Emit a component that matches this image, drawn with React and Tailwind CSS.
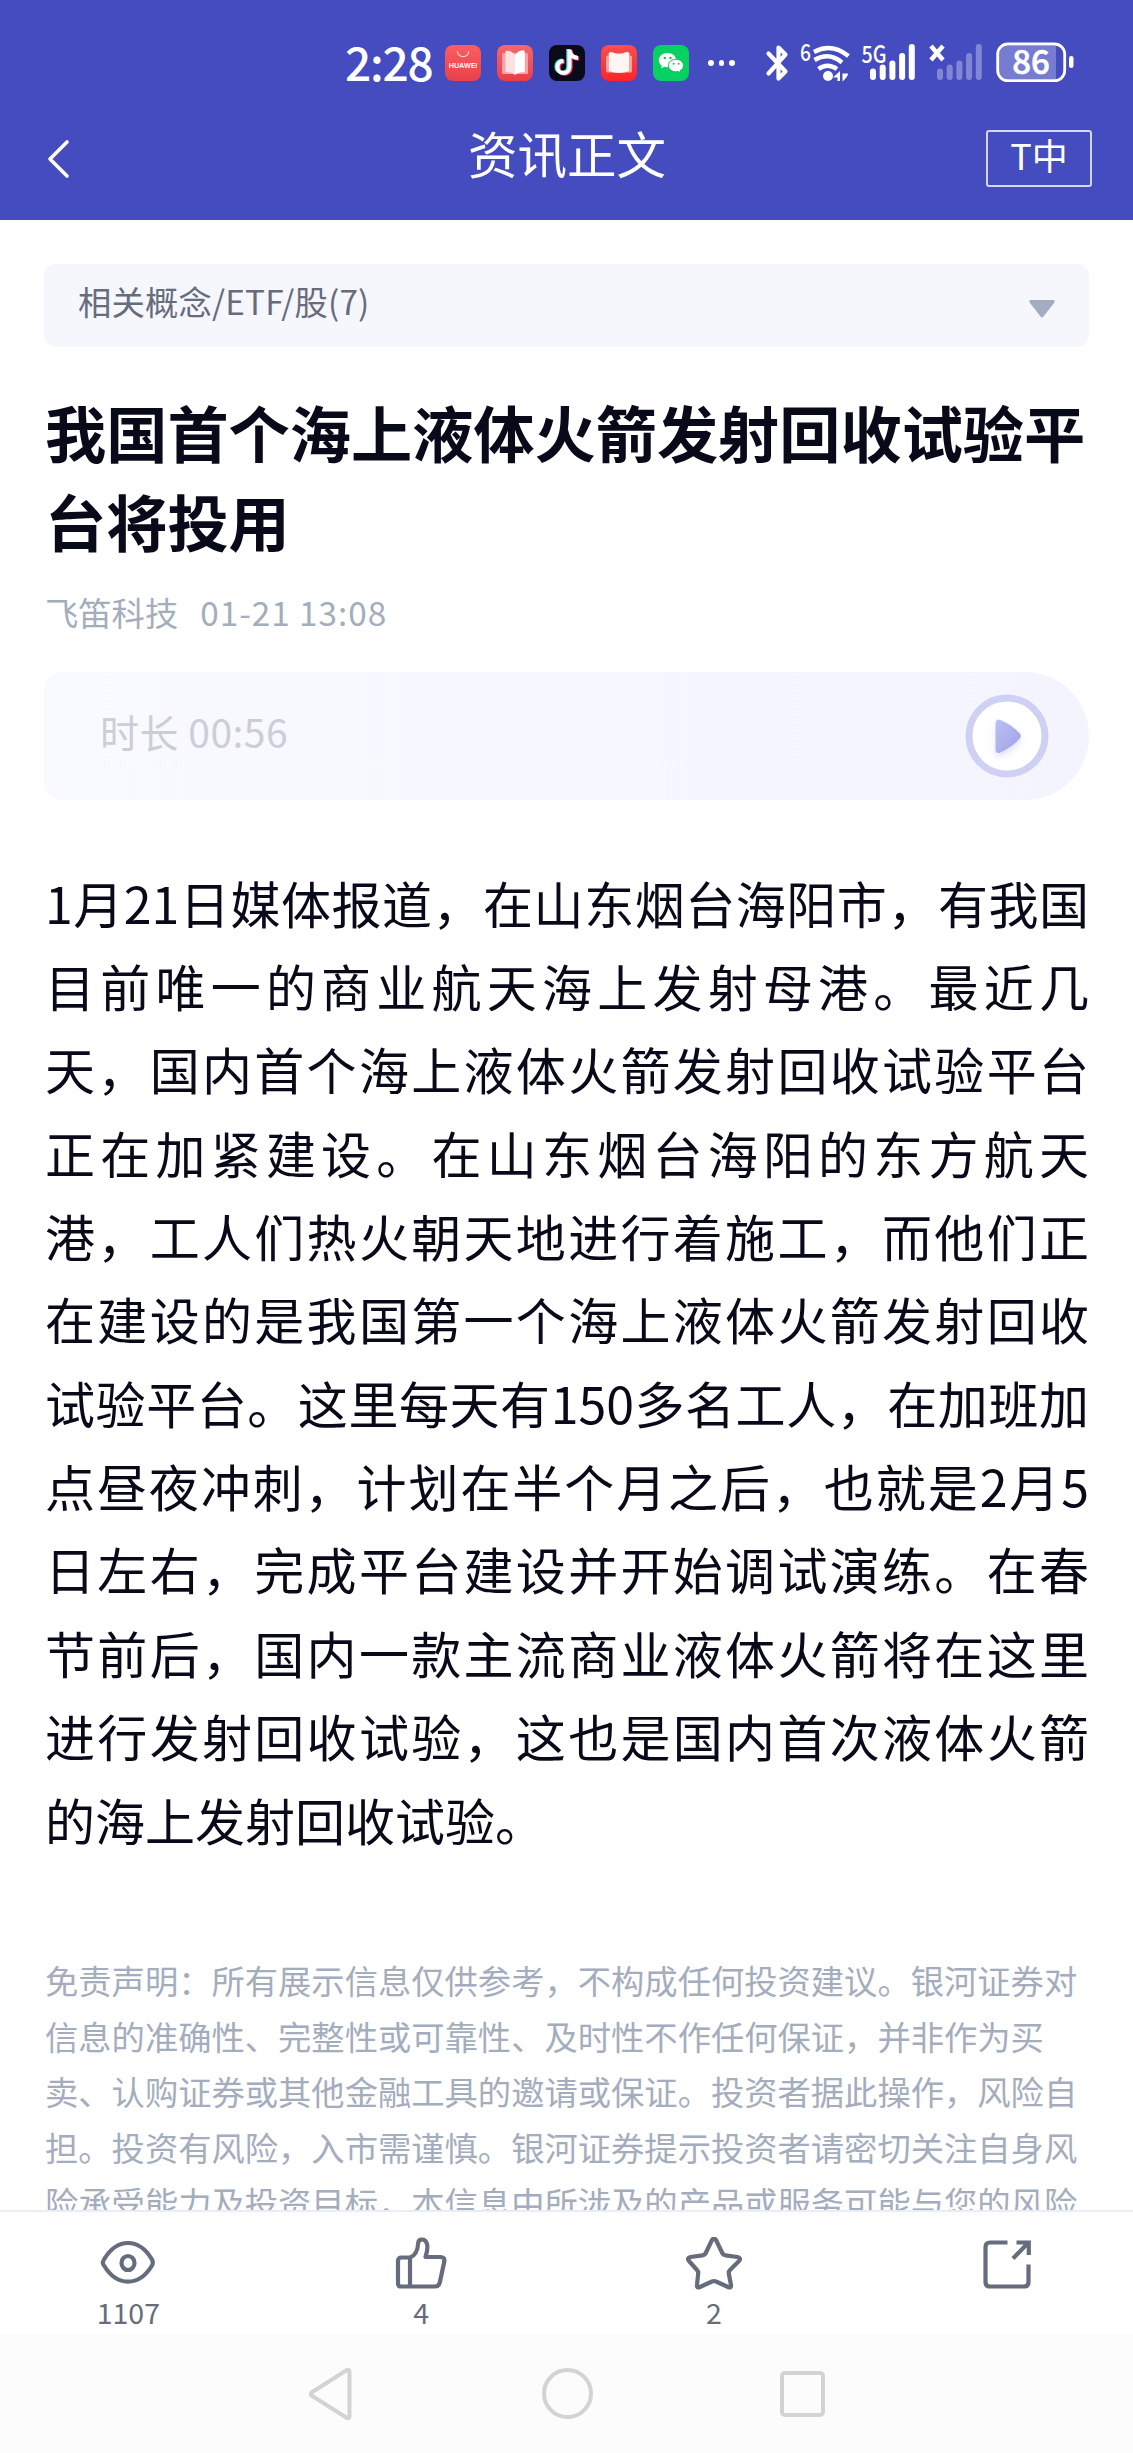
const bodyLines = [
  '1月21日媒体报道，在山东烟台海阳市，有我国',
  '目前唯一的商业航天海上发射母港。最近几',
  '天，国内首个海上液体火箭发射回收试验平台',
  '正在加紧建设。在山东烟台海阳的东方航天',
  '港，工人们热火朝天地进行着施工，而他们正',
  '在建设的是我国第一个海上液体火箭发射回收',
  '试验平台。这里每天有150多名工人，在加班加',
  '点昼夜冲刺，计划在半个月之后，也就是2月5',
  '日左右，完成平台建设并开始调试演练。在春',
  '节前后，国内一款主流商业液体火箭将在这里',
  '进行发射回收试验，这也是国内首次液体火箭',
  '的海上发射回收试验。',
];

const disclaimerLines = [
  '免责声明：所有展示信息仅供参考，不构成任何投资建议。银河证券对',
  '信息的准确性、完整性或可靠性、及时性不作任何保证，并非作为买',
  '卖、认购证券或其他金融工具的邀请或保证。投资者据此操作，风险自',
  '担。投资有风险，入市需谨慎。银河证券提示投资者请密切关注自身风',
  '险承受能力及投资目标，本信息中所涉及的产品或服务可能与您的风险',
];

const HuaweiIcon = () => (
  <svg className="size-9" viewBox="0 0 36 36">
    <defs>
      <linearGradient id="hw" x1="0" y1="0" x2="0" y2="1">
        <stop offset="0" stopColor="#fb5d62" />
        <stop offset="1" stopColor="#e9404a" />
      </linearGradient>
    </defs>
    <rect width="36" height="36" rx="8" fill="url(#hw)" />
    <path d="M12.500 6.200a5.600 5.600 0 0 0 11.200 0" fill="none" stroke="#ffd9d9" strokeWidth="1.100" />
    <text x="18" y="23.200" textAnchor="middle" fontSize="6.600" fontWeight="600" fill="#fff" textLength="28.500" lengthAdjust="spacingAndGlyphs" fontFamily="Inter, sans-serif">
      HUAWEI
    </text>
  </svg>
);

const BookIcon = () => (
  <svg className="size-9" viewBox="0 0 36 36">
    <defs>
      <linearGradient id="bk" x1="0" y1="0" x2="0" y2="1">
        <stop offset="0" stopColor="#f4686c" />
        <stop offset="1" stopColor="#ea3d47" />
      </linearGradient>
    </defs>
    <rect width="36" height="36" rx="8" fill="url(#bk)" />
    <rect x="5" y="8" width="26" height="21" rx="1.500" fill="#f8a4a6" />
    <path d="M8.500 6Q14 4.500 18 10v20q-3-3-9.500-3z" fill="#fbe1e2" />
    <path d="M18 10q3-4.500 8-4.800 1.800 0 1.800 1.800v20q-7 0-9.800 3z" fill="#fff" />
  </svg>
);

const note = 'M20.500 4.500v17.500a6 6 0 1 1-6-6M20.500 5q.6 7.400 8.500 8';

const TiktokIcon = () => (
  <svg className="size-9" viewBox="0 0 36 36" fill="none" strokeWidth="4">
    <rect width="36" height="36" rx="8" fill="#0b0a18" />
    <path d={note} stroke="#2ce5e4" transform="translate(-1.200 -.6)" />
    <path d={note} stroke="#f9305a" transform="translate(1.200 .8)" />
    <path d={note} stroke="#fff" />
  </svg>
);

const ReaderIcon = () => (
  <svg className="size-9" viewBox="0 0 36 36">
    <defs>
      <linearGradient id="rd" x1="0" y1="0" x2="0" y2="1">
        <stop offset="0" stopColor="#ff4e4c" />
        <stop offset="1" stopColor="#fb2429" />
      </linearGradient>
    </defs>
    <rect width="36" height="36" rx="8" fill="url(#rd)" />
    <rect x="5" y="10.500" width="26" height="17" rx="1.500" fill="#ffa3a0" />
    <path d="M7.500 8.500q.5-2 3-1.500 7.500 3.500 15 0 2.500-.5 3 1.500l-.5 3V26q-10 4-20 0V11.500z" fill="#fff5f3" />
  </svg>
);

const WechatIcon = () => (
  <svg className="size-9" viewBox="0 0 36 36">
    <rect width="36" height="36" rx="8" fill="#07d160" />
    <path d="M14.500 8C9.500 8 5.800 11.200 5.800 15.200c0 2.300 1.200 4.200 3.100 5.500l-.9 2.700 3.200-1.600c5.600 1.500 12-1.300 12-6.600 0-4-3.700-7.200-8.700-7.200z" fill="#fff" />
    <path d="M23 14.300c-4.300 0-7.600 2.800-7.600 6.300 0 4.500 5 7.200 9.800 5.900l2.700 1.500-.7-2.400c2-1.100 3.300-2.900 3.300-5 0-3.500-3.200-6.300-7.500-6.300z" fill="#fff" stroke="#07c85a" strokeWidth="1" />
    <g fill="#07c85a">
      <circle cx="11.800" cy="13" r="1.200" />
      <circle cx="17.500" cy="13" r="1.200" />
      <circle cx="20.600" cy="18.800" r="1" />
      <circle cx="25.600" cy="18.800" r="1" />
    </g>
  </svg>
);

const SignalBars = () => (
  <g>
    <rect x="0" y="24.500" width="6" height="11.500" rx="3" />
    <rect x="9.700" y="20.500" width="6" height="15.500" rx="3" />
    <rect x="19.400" y="16.500" width="6" height="19.500" rx="3" />
    <rect x="29.100" y="9" width="6" height="27" rx="3" />
    <rect x="38.800" y="0" width="6" height="36" rx="3" />
  </g>
);

const StatusBar = () => (
  <div className="flex h-[126px] items-center pl-[345px] text-white">
    <span className="w-[100px] pb-1 text-[46px] leading-[60px] font-medium tracking-[-1.2px]">2:28</span>
    <div className="flex gap-4">
      <HuaweiIcon />
      <BookIcon />
      <TiktokIcon />
      <ReaderIcon />
      <WechatIcon />
    </div>
    <div className="ml-[19px] flex gap-[5px]">
      <i className="size-[5.5px] rounded-full bg-white" />
      <i className="size-[5.5px] rounded-full bg-white" />
      <i className="size-[5.5px] rounded-full bg-white" />
    </div>
    <svg className="ml-[30px] h-10 w-[26px] shrink-0" viewBox="0 0 26 40" fill="none" stroke="#fff" strokeWidth="4.200" strokeLinecap="round" strokeLinejoin="round">
      <path d="M3.500 10.500 20.500 28.500 13.500 35.500V4.500L20.500 11.500 3.500 30.500" />
    </svg>
    <svg className="ml-[9px] h-10 w-[52px] shrink-0 overflow-visible" viewBox="0 0 52 40" fill="none" stroke="#fff" strokeWidth="4.500" strokeLinecap="round">
      <text x="0" y="17.500" fontSize="24" fontWeight="500" fill="#fff" stroke="none" textLength="11" lengthAdjust="spacingAndGlyphs">
        6
      </text>
      <path d="M14 9q17-9.500 34.500 4" strokeLinecap="butt" />
      <path d="M14.500 17q14.500-8.500 27.500 2.500" strokeLinecap="butt" />
      <path d="M18.500 26q9-6.500 18.500 0" strokeLinecap="butt" />
      <circle cx="28" cy="33" r="5" fill="#fff" stroke="none" />
      <path d="M40 28v10h-2.500v-3.500H33zM42.500 38.500V30.500h5.500q0 3-5.500 8z" fill="#fff" stroke="none" />
    </svg>
    <svg className="ml-[8.5px] h-10 w-[56px] shrink-0 overflow-visible" viewBox="0 0 56 40" fill="#fff">
      <text x="1.500" y="19.500" fontSize="24" fontWeight="500" textLength="25" lengthAdjust="spacingAndGlyphs">
        5G
      </text>
      <g transform="translate(10 1)">
        <SignalBars />
      </g>
    </svg>
    <svg className="ml-[11px] h-10 w-[56px] shrink-0" viewBox="0 0 56 40" fill="#fff">
      <path d="M4 3l12 14M16 3 4 17" stroke="#fff" strokeWidth="4.400" />
      <g transform="translate(10 1)" opacity=".33">
        <SignalBars />
      </g>
    </svg>
    <svg className="ml-[13px] h-10 w-[80px] shrink-0 overflow-visible" viewBox="0 0 80 40">
      <path d="M11 3h49v33H11a8 8 0 0 1-8-8V11a8 8 0 0 1 8-8z" fill="#fff" opacity=".27" />
      <rect x="1.700" y="1" width="67" height="36.600" rx="10" fill="none" stroke="#fff" strokeWidth="2.800" />
      <rect x="73" y="13" width="4.500" height="12" rx="2.200" fill="#fff" />
      <text x="35" y="31" textAnchor="middle" fontSize="33" fontWeight="500" fill="#fff" stroke="#fff" strokeWidth=".6">
        86
      </text>
    </svg>
  </div>
);

const TitleBar = () => (
  <div className="flex h-[94px] items-start justify-between pr-[41px] pl-[46px] text-white">
    <div className="flex w-[102px] pt-[13px]">
      <svg className="h-10 w-6" viewBox="0 0 24 40" fill="none" stroke="#fff" strokeWidth="3.600" strokeLinecap="round" strokeLinejoin="round">
        <path d="M21 3 4 20l17 17" />
      </svg>
    </div>
    <h1 className="text-[49.5px] leading-[53px]">资讯正文</h1>
    <button type="button" className="mt-1 h-[57px] w-[106px] rounded-[3px] border-2 border-[#d4d6f3] pb-2 text-[36px] leading-[45px]">
      T中
    </button>
  </div>
);

const PlayButton = () => (
  <svg className="size-[84px]" viewBox="0 0 84 84">
    <defs>
      <linearGradient id="play" x1="0" y1="0" x2="1" y2="1">
        <stop offset="0" stopColor="#bcc0f4" />
        <stop offset="1" stopColor="#9ea2e6" />
      </linearGradient>
      <filter id="glow" x="-50%" y="-50%" width="200%" height="200%">
        <feDropShadow dx="0" dy="4" stdDeviation="3" floodColor="#a9adea" floodOpacity=".35" />
      </filter>
    </defs>
    <circle cx="42" cy="42" r="38" fill="#fff" stroke="#cfd1f4" strokeWidth="7" />
    <path d="M30.500 30q0-6 5-4Q47 31 54.500 39q2.500 3 0 6Q47 53 35.500 58.500q-5 2-5-3.500z" fill="url(#play)" filter="url(#glow)" />
  </svg>
);

const actions = [
  {
    label: '1107',
    icon: (
      <>
        <path d="M3.800 26Q3.800 24.500 5 22.500C18 0.500 40 0.500 53 22.500q1.500 3 0 6C40 50 18 50 5 28.500q-1.200-1.500-1.200-2.500z" />
        <ellipse cx="29" cy="26" rx="6.500" ry="7" />
      </>
    ),
  },
  {
    label: '4',
    icon: (
      <>
        <path d="M18 20.500H9.500q-3.500 0-3.500 3.500v22.500q0 3 3 3h34q4 0 4.800-4l4.500-21q.8-4.500-4-4.500H33.500C37.500 8 34.500 2.500 30 2.500q-3.500 0-3.800 3.500-.7 12-8.200 14.500z" />
        <path d="M18 20.500v29" />
      </>
    ),
  },
  {
    label: '2',
    icon: (
      <path d="M27 3q2-3 4 0l6.500 13.500q1 1.500 3 1.800L52.500 20q4 .8 1.500 4L45 33q-1.500 1.500-1.200 3.500L46 48q.5 3.500-3 2L31 44.500q-2-1-4 0L15 50q-3.500 1.500-3-2l1.200-11.500q.3-2-1.200-3.500L4 24q-2.500-3.200 1.500-4l12-1.700q2-.3 3-1.800z" />
    ),
  },
  {
    label: '',
    icon: (
      <g strokeLinecap="butt" strokeLinejoin="miter">
        <path d="M29.500 5.500H12q-4.500 0-4.500 4.500v35q0 4.500 4.500 4.500h34q4.500 0 4.500-4.500V27.500" />
        <path d="M38.500 5.500h12.300V18M50 6 35 21.500" />
      </g>
    ),
  },
];

const ActionBar = () => (
  <footer className="flex h-[124px] shrink-0 border-t-2 border-[#eaedf5] bg-white text-[#666c7c]">
    <div className="-mx-[18px] flex w-[1171px] shrink-0">
      {actions.map(({ label, icon }) => (
        <div key={label} className="flex flex-1 flex-col items-center pt-[25px]">
          <svg className="h-[54px] w-[58px]" viewBox="0 0 58 54" fill="none" stroke="currentColor" strokeWidth="4.200" strokeLinejoin="round">
            {icon}
          </svg>
          <span className="mt-px text-[28.5px] leading-[40px]">{label}</span>
        </div>
      ))}
    </div>
  </footer>
);

const SystemNav = () => (
  <nav className="flex h-[119px] shrink-0 items-center justify-center gap-[181px] bg-[#fcfcfc]">
    <svg className="h-[52px] w-[52px]" viewBox="0 0 52 52" fill="none" stroke="#d3d3d3" strokeWidth="4" strokeLinejoin="round">
      <path d="M2.500 24.500 38 2q2.500-1 2.500 2v44q0 3-2.500 2L2.500 27.500q-2-1.500 0-3z" />
    </svg>
    <i className="size-[51px] rounded-full border-4 border-[#d3d3d3]" />
    <i className="ml-1.5 h-[46px] w-[45px] rounded-[5px] border-4 border-[#d3d3d3]" />
  </nav>
);

const App = () => (
  <div className="flex h-[2453px] w-[1133px] flex-col overflow-hidden bg-white font-['Noto_Sans_CJK_SC',sans-serif]">
    <header className="h-[220px] shrink-0 bg-[#444cbf]">
      <StatusBar />
      <TitleBar />
    </header>

    <main className="min-h-0 flex-1 overflow-hidden px-11 pt-11 text-[#090a19]">
      <div className="flex h-[83px] items-center justify-between rounded-[12px] bg-[#f6f7fc] px-[34px] text-[#666c7c]">
        <span className="pb-2.5 text-[33.3px] leading-[50px] tracking-[0.2px]">相关概念/ETF/股(7)</span>
        <svg className="mt-1.5 h-[18px] w-[26px]" viewBox="0 0 26 18" fill="#a4adbf">
          <path d="M2 0h22q3 0 1 3L14.500 16.500q-1.500 2-3 0L1 3q-2-3 1-3z" />
        </svg>
      </div>

      <h2 className="mt-10 ml-px text-[61.2px] leading-[89.3px] font-bold whitespace-nowrap">
        我国首个海上液体火箭发射回收试验平
        <br />
        台将投用
      </h2>

      <div className="mt-[21px] ml-px flex h-[50px] items-center gap-[22px] text-[33.3px] leading-[50px] text-[#a4adbd]">
        <span>飞笛科技</span>
        <span className="tracking-[1px]">01-21 13:08</span>
      </div>

      <div className="mt-[35px] flex h-32 items-center justify-between rounded-l-[18px] rounded-r-[64px] bg-linear-to-r from-[#f9faff] to-[#f4f4ff] pr-10 pl-14">
        <span className="pb-2.5 text-[39px] leading-[56px] tracking-[0.5px] text-[#cbced9]">时长 00:56</span>
        <PlayButton />
      </div>

      <article className="mt-[61px] ml-px text-[50px] leading-[83.36px]">
        {bodyLines.map((line, i) => (
          <p key={line} className={i < bodyLines.length - 1 ? 'text-justify whitespace-nowrap [text-align-last:justify]' : ''}>
            {line}
          </p>
        ))}
      </article>

      <div className="mt-[91px] ml-px text-[33.3px] leading-[55.6px] whitespace-nowrap text-[#a4adbd]">
        {disclaimerLines.map((line) => (
          <p key={line}>{line}</p>
        ))}
      </div>
    </main>

    <ActionBar />
    <SystemNav />
  </div>
);

export default App;
